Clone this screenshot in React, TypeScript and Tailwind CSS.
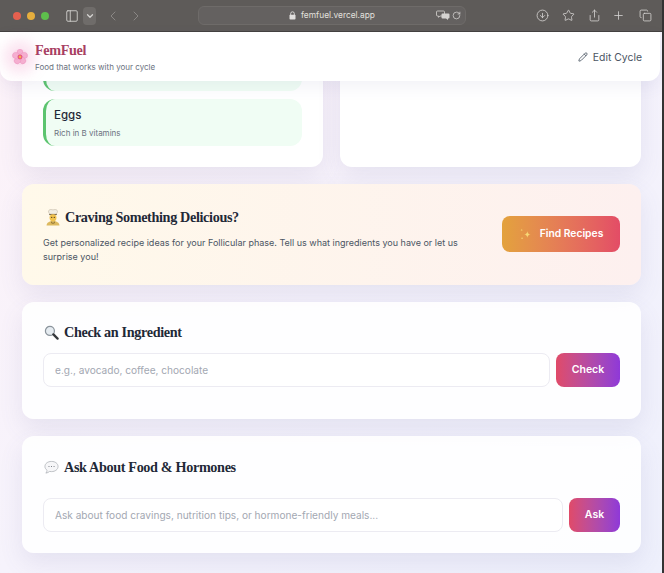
import { Pencil, ChevronDown, ChevronLeft, ChevronRight, PanelLeft, RotateCw, CircleArrowDown, Star, Share, Plus, Copy } from 'lucide-react';

const sans = 'font-["Inter","Liberation_Sans",sans-serif]';
const serif = 'font-["Liberation_Serif",serif]';
const cardShadow = 'shadow-[0_10px_24px_rgba(90,90,150,0.11)]';
const headingClass = `${serif} flex items-center text-[14.200px] tracking-[-0.35px] font-bold leading-5 text-[#1f2937]`;

function FlowerIcon() {
  return (
    <svg width="16" height="16" viewBox="0 0 18 18">
      {[0, 72, 144, 216, 288].map((a) => (
        <ellipse key={a} cx="9" cy="4.600" rx="3.500" ry="4.300" fill="#f5aed0" stroke="#e884b5" strokeWidth=".4" transform={`rotate(${a} 9 9)`} />
      ))}
      <circle cx="9" cy="9" r="2.800" fill="#e8607f" />
      <circle cx="9" cy="9" r="1.300" fill="#f4b648" />
    </svg>
  );
}

function ChefIcon() {
  return (
    <svg width="16" height="17" viewBox="0 0 15 17">
      <path d="M3.500 1.200c1-.9 2.500-.7 4-.3 1.500-.4 3-.6 4 .3.900.9.500 2.400-.4 3.100v1.200H3.900V4.300c-.9-.7-1.300-2.200-.4-3.100z" fill="#f1ede3" stroke="#b9ad97" strokeWidth=".5" />
      <rect x="3.700" y="4.900" width="7.600" height="1.200" fill="#7f6f55" />
      <circle cx="7.500" cy="8.800" r="3.500" fill="#f0c24e" />
      <circle cx="6.200" cy="8.400" r=".6" fill="#4a3a20" />
      <circle cx="8.800" cy="8.400" r=".6" fill="#4a3a20" />
      <path d="M1 16.500c.3-3 2.800-4.500 6.500-4.500s6.200 1.500 6.500 4.500z" fill="#dcb95f" />
      <path d="M5.500 12.300l2 1.700 2-1.700v1.700l-2 1-2-1z" fill="#9a7d3c" />
    </svg>
  );
}

function LensIcon() {
  return (
    <svg width="15" height="15" viewBox="0 0 16 16">
      <circle cx="6.300" cy="6.300" r="4.800" fill="#e6ecf1" stroke="#8b949c" strokeWidth="1.300" />
      <path d="M10 10l4.500 4.500" stroke="#33363a" strokeWidth="2.400" strokeLinecap="round" />
    </svg>
  );
}

function BubbleIcon() {
  return (
    <svg width="15" height="15" viewBox="0 0 16 15">
      <path d="M8 1C4 1 1 3.300 1 6.400c0 1.700.9 3.100 2.300 4.100-.1 1.100-.6 2.200-1.300 3 1.500-.2 2.900-.9 3.900-1.800.7.100 1.400.2 2.100.2 4 0 7-2.400 7-5.500S12 1 8 1z" fill="#f6f6f8" stroke="#a9adb3" strokeWidth=".8" />
      <circle cx="5.300" cy="6.400" r=".6" fill="#6b7078" />
      <circle cx="8" cy="6.400" r=".6" fill="#6b7078" />
      <circle cx="10.700" cy="6.400" r=".6" fill="#6b7078" />
    </svg>
  );
}

function SparkleIcon() {
  return (
    <svg width="13" height="13" viewBox="0 0 14 14" fill="#f7d774">
      <path d="M9 3.500c.3 2.200 1.300 3.200 3.500 3.500-2.200.3-3.200 1.300-3.500 3.500-.3-2.200-1.300-3.200-3.500-3.500 2.200-.3 3.200-1.300 3.500-3.500z" />
      <path d="M3 .8c.1.900.5 1.300 1.400 1.400-.9.100-1.300.5-1.400 1.400-.1-.9-.5-1.300-1.400-1.400.9-.1 1.300-.5 1.400-1.400z" />
      <circle cx="3.300" cy="11" r=".8" />
    </svg>
  );
}

function LockIcon() {
  return (
    <svg width="7" height="9" viewBox="0 0 7 9">
      <path d="M1.700 4V2.600a1.800 1.800 0 0 1 3.600 0V4" fill="none" stroke="currentColor" strokeWidth=".9" />
      <rect x=".5" y="3.800" width="6" height="4.700" rx=".8" fill="currentColor" />
    </svg>
  );
}

function TranslateIcon() {
  return (
    <svg width="14" height="11" viewBox="0 0 14 11">
      <path d="M1.500 1h6a1 1 0 0 1 1 1v3a1 1 0 0 1-1 1H4L2.500 7.300V6h-1a1 1 0 0 1-1-1V2a1 1 0 0 1 1-1z" fill="none" stroke="currentColor" strokeWidth=".8" />
      <path d="M6.500 3.500h6a1 1 0 0 1 1 1v3a1 1 0 0 1-1 1h-.5v1.500L10 8.500H6.500a1 1 0 0 1-1-1v-3a1 1 0 0 1 1-1z" fill="currentColor" />
    </svg>
  );
}

function BrowserBar() {
  return (
    <div className="h-8 shrink-0 flex items-center bg-[#5e5b59] text-[#d5d3d1] border-b border-[#44413f]">
      <div className="flex gap-[6px] ml-[13px] w-[50px]">
        <span className="size-2 rounded-full bg-[#e5604f]" />
        <span className="size-2 rounded-full bg-[#e6ae3d]" />
        <span className="size-2 rounded-full bg-[#5ebf4c]" />
      </div>
      <PanelLeft size={14} strokeWidth={1.500} className="ml-[2px]" />
      <span className="ml-[4px] w-[13px] h-[18px] rounded bg-[#6f6c6a] flex items-center justify-center">
        <ChevronDown size={10} strokeWidth={3} />
      </span>
      <ChevronLeft size={16} strokeWidth={1.500} className="ml-[9px] text-[#8a8785]" />
      <ChevronRight size={16} strokeWidth={1.500} className="ml-[7px] text-[#8a8785]" />
      <div className="ml-[54px] w-[268px] h-[19px] rounded-md bg-[#646160] border border-[#6e6b69] flex items-center relative">
        <div className={`${sans} flex-1 flex items-center justify-center gap-[5px] text-[8.400px] text-[#e2e0de]`}>
          <LockIcon />
          femfuel.vercel.app
        </div>
        <span className="absolute right-[15px] top-[3px]"><TranslateIcon /></span>
        <RotateCw size={9} className="absolute right-[4px]" />
      </div>
      <CircleArrowDown size={13} strokeWidth={1.500} className="ml-[70px]" />
      <Star size={13} strokeWidth={1.500} className="ml-[13px]" />
      <Share size={13} strokeWidth={1.500} className="ml-[13px]" />
      <Plus size={13} strokeWidth={1.500} className="ml-[11px]" />
      <Copy size={13} strokeWidth={1.500} className="ml-[14px]" />
    </div>
  );
}

function AskCard({ icon, title, placeholder, button, buttonWidth, className }: { icon: React.ReactNode; title: string; placeholder: string; button: string; buttonWidth: string; className: string }) {
  return (
    <section className={`h-[117px] rounded-xl bg-white/90 ${cardShadow} px-[21px] ${className}`}>
      <h2 className={headingClass}>
        <span className="w-[21px] pl-px">{icon}</span>
        {title}
      </h2>
      <div className="flex gap-[6px] mt-[var(--gap)]">
        <input readOnly placeholder={placeholder} className={`${sans} min-w-0 flex-1 h-[34px] rounded-lg border border-[#ecebf2] bg-white px-[11px] text-[10.100px] placeholder:text-[#a3a8b2]`} />
        <button className={`${sans} ${buttonWidth} h-[34px] rounded-lg bg-gradient-to-r from-[#e04a68] to-[#8f38d8] text-[10.500px] font-semibold text-white`}>{button}</button>
      </div>
    </section>
  );
}

export default function App() {
  return (
    <div className="relative w-[664px] h-[573px] overflow-hidden flex flex-col bg-gradient-to-br from-[#fdf2f8] via-[#f6f3fc] to-[#eef0fc] border-r-2 border-[#333333]">
      <BrowserBar />
      <header className="absolute top-8 left-0 right-[2px] z-10 h-[49px] rounded-b-xl bg-white shadow-[0_6px_16px_rgba(90,90,150,0.08)] flex items-center justify-between pl-3 pr-[18px]">
        <div className="flex items-center gap-[7px]">
          <div className="size-4 rounded-full bg-[#fbdcec] shadow-[0_0_14px_8px_rgba(240,140,195,0.26)]">
            <FlowerIcon />
          </div>
          <div className="-mt-px">
            <p className={`${serif} text-[14.200px] tracking-[-0.35px] leading-5 font-bold text-[#a83f63]`}>FemFuel</p>
            <p className={`${sans} text-[8px] leading-3 mt-px text-[#6b7280]`}>Food that works with your cycle</p>
          </div>
        </div>
        <button className={`${sans} flex items-center gap-[5px] mt-[2px] text-[10.400px] text-[#4b5563]`}>
          <Pencil size={10} />
          Edit Cycle
        </button>
      </header>

      <main className="flex flex-col gap-[17px] pl-[22px] pr-[21px] pt-[11px]">
        <div className="grid grid-cols-2 gap-[17px]">
          <section className={`h-[124px] rounded-b-xl bg-white ${cardShadow} px-[21px] flex flex-col justify-end gap-2 pb-[21px]`}>
            <div className="h-[48px] rounded-xl border-l-[3px] border-[#5cc46f] bg-[#f0fdf4]" />
            <div className="h-[47px] rounded-xl border-l-[3px] border-[#5cc46f] bg-[#f0fdf4] pl-2 pt-2">
              <p className={`${sans} text-[11.500px] leading-4 font-medium text-[#1f2937]`}>Eggs</p>
              <p className={`${sans} text-[8px] leading-3 mt-1 text-[#6b7280]`}>Rich in B vitamins</p>
            </div>
          </section>
          <section className={`h-[124px] rounded-b-xl bg-white ${cardShadow}`} />
        </div>

        <section className={`h-[101px] rounded-xl bg-gradient-to-r from-[#fff9ea] to-[#fdf0ef] ${cardShadow} px-[21px] flex items-center justify-between`}>
          <div className="w-[425px] mt-[2px]">
            <h2 className={headingClass}>
              <span className="w-[22px] pl-[2px]"><ChefIcon /></span>
              Craving Something Delicious?
            </h2>
            <p className={`${sans} mt-[9px] text-[9px] leading-[14px] text-[#4b5563]`}>
              Get personalized recipe ideas for your Follicular phase. Tell us what ingredients you have or let us surprise you!
            </p>
          </div>
          <button className={`${sans} w-[118px] h-9 -mt-px rounded-lg bg-gradient-to-r from-[#e3a23c] to-[#e34c66] flex items-center justify-center gap-2 text-[10.300px] font-semibold text-white`}>
            <SparkleIcon />
            Find Recipes
          </button>
        </section>

        <AskCard
          icon={<LensIcon />}
          title="Check an Ingredient"
          placeholder="e.g., avocado, coffee, chocolate"
          button="Check"
          buttonWidth="w-[64px]"
          className="pt-5 [--gap:11px]"
        />
        <AskCard
          icon={<BubbleIcon />}
          title="Ask About Food & Hormones"
          placeholder="Ask about food cravings, nutrition tips, or hormone-friendly meals..."
          button="Ask"
          buttonWidth="w-[51px]"
          className="pt-[21px] [--gap:21px]"
        />
      </main>
    </div>
  );
}
